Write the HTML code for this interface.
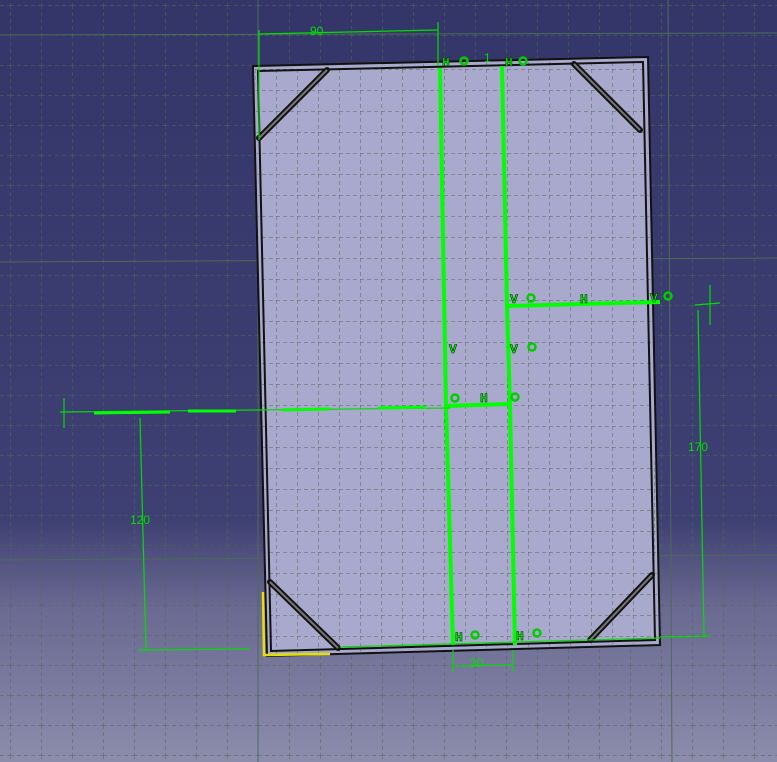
<!DOCTYPE html>
<html><head><style>
html,body{margin:0;padding:0;width:777px;height:762px;overflow:hidden}
svg{display:block}
.c{font-family:"Liberation Mono",monospace;font-weight:bold}
.d{font-family:"Liberation Sans",sans-serif}
</style></head><body>
<svg width="777" height="762" viewBox="0 0 777 762" xmlns="http://www.w3.org/2000/svg">
<defs>
<linearGradient id="bg" x1="0" y1="0" x2="0" y2="1">
<stop offset="0" stop-color="#34366a"/>
<stop offset="0.68" stop-color="#3e3f72"/>
<stop offset="0.8" stop-color="#6a6a92"/>
<stop offset="1" stop-color="#8c8cac"/>
</linearGradient>
<pattern id="g" width="31" height="30" patternUnits="userSpaceOnUse" x="10" y="5">
<path d="M0 0H31M0 0V30" stroke="#4a6a52" stroke-width="1" stroke-dasharray="4 3" fill="none"/>
</pattern>
<pattern id="gp" width="21" height="21" patternUnits="userSpaceOnUse" x="3" y="6">
<path d="M0 0H21M0 0V21" stroke="#4f6a58" stroke-width="1" stroke-dasharray="4 3" fill="none"/>
</pattern>
<clipPath id="pc"><polygon points="255,68 646,59 658,643 268,654"/></clipPath>
</defs>
<rect width="777" height="762" fill="url(#bg)"/>
<rect width="777" height="762" fill="url(#g)"/>
<g stroke="#4d6b55" stroke-width="1">
<line x1="0" y1="35" x2="777" y2="33"/><line x1="0" y1="262" x2="777" y2="258"/>
<line x1="0" y1="560" x2="777" y2="555"/>
<line x1="258" y1="0" x2="258" y2="762"/><line x1="668" y1="0" x2="672" y2="762"/>
</g>
<polygon points="253,66 648,57 660,645 267,656" fill="#a9a9cd"/>
<g clip-path="url(#pc)"><rect width="777" height="762" fill="url(#gp)"/></g>
<g fill="none" stroke="#111" stroke-width="2">
<polygon points="253,66 648,57 660,645 267,656"/>
<polygon points="258,71 643,62 655,640 271,651"/>
</g>
<g stroke="#111" stroke-width="6" stroke-linecap="round"><line x1="259" y1="138" x2="327" y2="70"/><line x1="574" y1="64" x2="640" y2="130"/><line x1="270" y1="582" x2="338" y2="648"/><line x1="590" y1="640" x2="652" y2="575"/></g>
<g stroke="#777" stroke-width="2"><line x1="259" y1="138" x2="327" y2="70"/><line x1="574" y1="64" x2="640" y2="130"/><line x1="270" y1="582" x2="338" y2="648"/><line x1="590" y1="640" x2="652" y2="575"/></g>
<g stroke="#00ff00" stroke-width="4" fill="none">
<polyline points="440,68 446,405 453,645"/>
<polyline points="502,66 507,305 510,405 515,645"/>
<line x1="445" y1="406" x2="510" y2="404"/>
<line x1="508" y1="306" x2="660" y2="302"/>
</g>
<g stroke="#00dd00" stroke-width="1.2" fill="none">
<line x1="258" y1="34" x2="438" y2="30"/>
<line x1="259" y1="30" x2="259" y2="140"/><line x1="438" y1="22" x2="438" y2="66"/>
<line x1="60" y1="412" x2="450" y2="408"/><line x1="64" y1="398" x2="64" y2="428"/>
<line x1="140" y1="418" x2="146" y2="650"/><line x1="138" y1="650" x2="250" y2="649"/>
<line x1="695" y1="305" x2="720" y2="303"/><line x1="698" y1="310" x2="704" y2="636"/>
<line x1="455" y1="666" x2="512" y2="665"/><line x1="453" y1="650" x2="453" y2="672"/><line x1="513" y1="650" x2="513" y2="672"/>
<line x1="340" y1="647" x2="660" y2="638"/><line x1="660" y1="637" x2="710" y2="636"/>
<line x1="710" y1="285" x2="710" y2="325"/>
</g>
<g stroke="#00ff00" stroke-width="3"><line x1="94" y1="413" x2="170" y2="412"/><line x1="188" y1="411" x2="236" y2="411"/><line x1="282" y1="410" x2="330" y2="409"/><line x1="378" y1="408" x2="426" y2="407"/></g>
<g fill="#00dd00" font-size="12" class="d">
<text x="310" y="35">90</text><text x="130" y="524">120</text><text x="688" y="451">170</text><text x="470" y="667">30</text><text x="484" y="62">1</text>
</g>
<g fill="#00ff00" stroke="#002200" stroke-width="0.6" font-size="13" class="c">
<text x="442" y="66">H</text><text x="505" y="66">H</text>
<text x="510" y="303">V</text><text x="580" y="303">H</text><text x="650" y="302">V</text>
<text x="449" y="353">V</text><text x="510" y="353">V</text>
<text x="480" y="402">H</text>
<text x="455" y="641">H</text><text x="516" y="640">H</text>
</g>
<g fill="none" stroke="#00cc00" stroke-width="2.5">
<circle cx="464" cy="61" r="3.5"/><circle cx="523" cy="61" r="3.5"/>
<circle cx="531" cy="298" r="3.5"/><circle cx="668" cy="296" r="3.5"/>
<circle cx="532" cy="347" r="3.5"/><circle cx="455" cy="398" r="3.5"/><circle cx="515" cy="397" r="3.5"/>
<circle cx="475" cy="635" r="3.5"/><circle cx="537" cy="633" r="3.5"/>
</g>
<g stroke="#e8e000" stroke-width="2.5" fill="none"><polyline points="263,592 264,655 330,654"/></g>
</svg>
</body></html>
